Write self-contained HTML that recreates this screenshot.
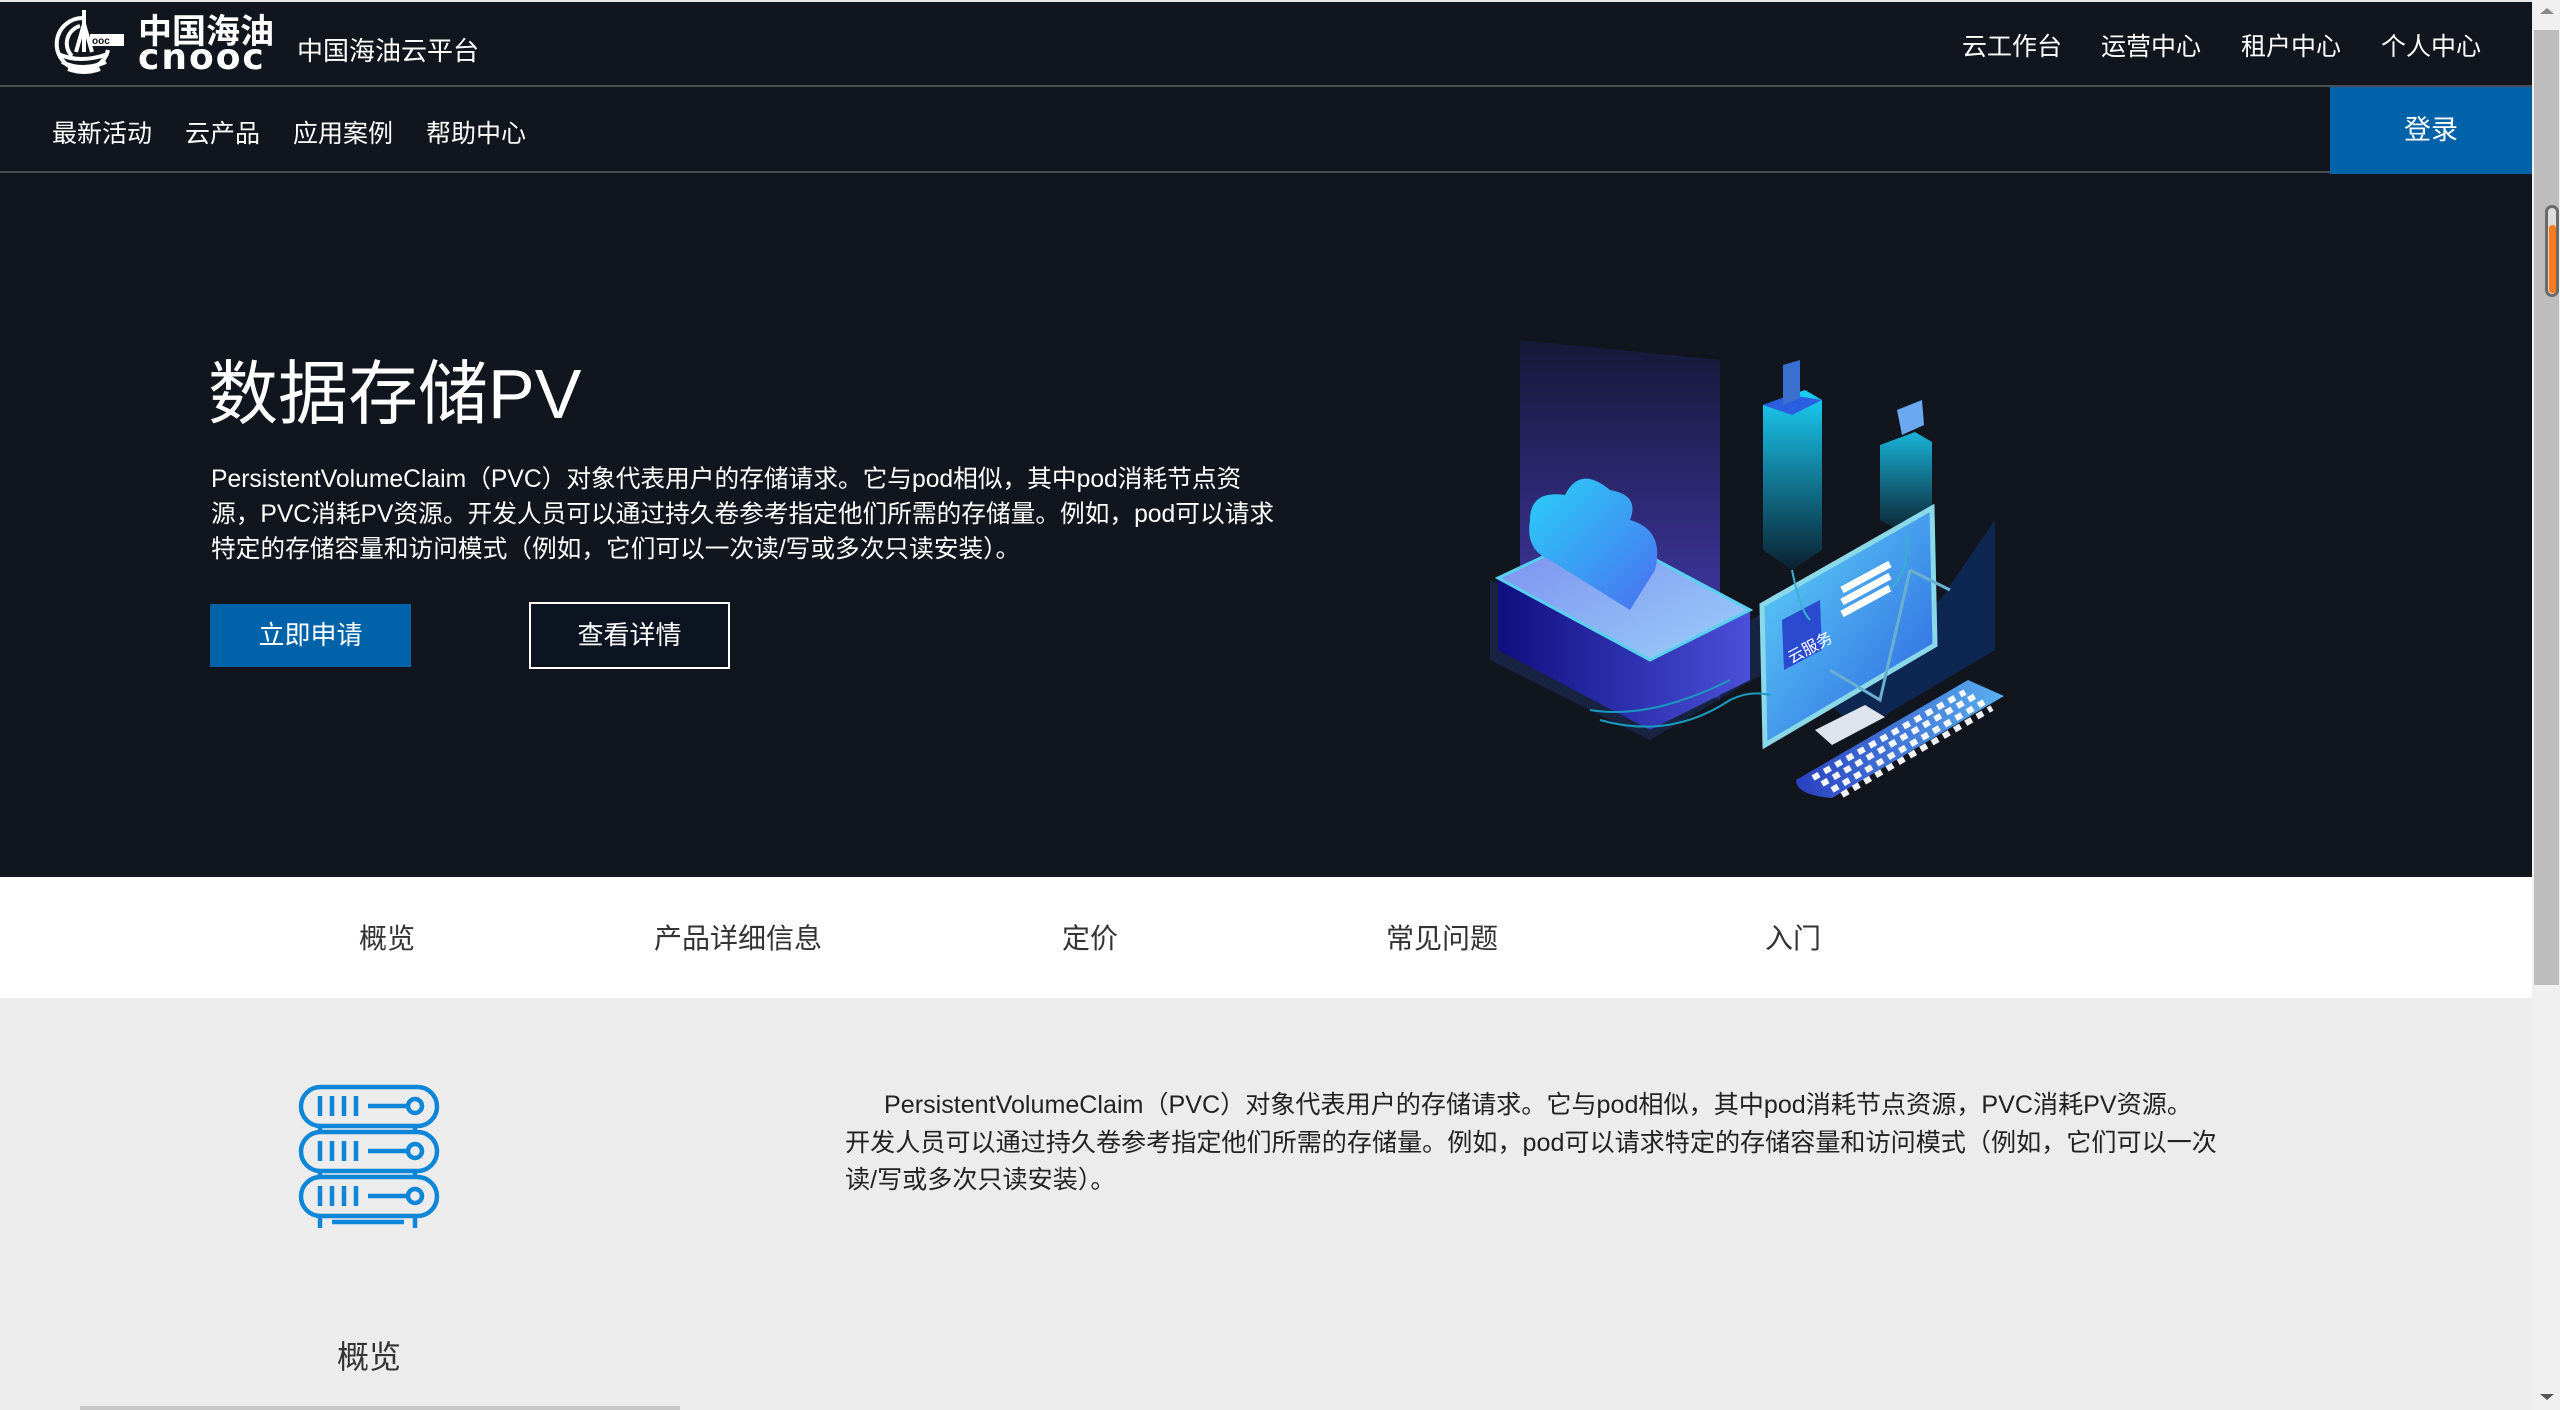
<!DOCTYPE html>
<html><head><meta charset="utf-8">
<style>
*{margin:0;padding:0;box-sizing:border-box}
html,body{width:2560px;height:1410px;overflow:hidden;background:#ececec;font-family:"Liberation Sans","Noto Sans CJK SC",sans-serif}
.abs{position:absolute}
#top{left:0;top:0;width:2532px;height:85px;background:#11151d;border-top:2px solid #e8e8e8}
#l1{left:0;top:85px;width:2532px;height:2px;background:#4a4d52}
#nav{left:0;top:87px;width:2532px;height:85px;background:#11151d}
#l2{left:0;top:171px;width:2330px;height:2px;background:#4a4d52}
#hero{left:0;top:173px;width:2532px;height:704px;background:#11151d}
.w{color:#fff;white-space:nowrap}
.t{font-size:24.7px}
#tabs{left:0;top:877px;width:2532px;height:121px;background:#fff}
.tab{position:absolute;top:40px;font-size:28px;color:#333;transform:translateX(-50%);white-space:nowrap}
</style></head><body>
<div id="top" class="abs"></div>
<div id="l1" class="abs"></div>
<div id="nav" class="abs"></div>
<div id="l2" class="abs"></div>
<div id="hero" class="abs"></div>

<!-- logo -->
<svg class="abs" style="left:50px;top:8px" width="78" height="68" viewBox="0 0 78 68">
<g fill="none" stroke="#fff" stroke-width="4">
<path d="M34 10 A26 26 0 1 0 58 42"/>
<path d="M30 18 A18 18 0 0 0 22 48"/>
<path d="M8 46 Q30 56 58 46"/><path d="M12 54 Q32 64 56 54"/><path d="M18 61 Q34 67 50 61"/>
</g>
<path d="M34 2 L34 44 M26 44 L34 16 L42 44" stroke="#fff" stroke-width="4" fill="none"/>
<rect x="40" y="26" width="34" height="12" fill="#fff"/>
<text x="42" y="36" font-size="10" font-weight="bold" fill="#11151d" font-family="Liberation Sans">ooc</text>
</svg>
<div class="abs w" style="left:138px;top:14px;font-size:34px;font-weight:bold;line-height:36px;letter-spacing:0px">中国海油</div>
<div class="abs w" style="left:138px;top:40px;font-size:36px;font-weight:bold;letter-spacing:2px;line-height:36px;font-family:'DejaVu Sans',sans-serif">cnooc</div>
<div class="abs w" style="left:297px;top:31px;font-size:26px">中国海油云平台</div>

<div class="abs w" style="left:1962px;top:27px;font-size:25px">云工作台</div>
<div class="abs w" style="left:2101px;top:27px;font-size:25px">运营中心</div>
<div class="abs w" style="left:2241px;top:27px;font-size:25px">租户中心</div>
<div class="abs w" style="left:2381px;top:27px;font-size:25px">个人中心</div>

<div class="abs w" style="left:52px;top:114px;font-size:25px">最新活动</div>
<div class="abs w" style="left:185px;top:114px;font-size:25px">云产品</div>
<div class="abs w" style="left:293px;top:114px;font-size:25px">应用案例</div>
<div class="abs w" style="left:426px;top:114px;font-size:25px">帮助中心</div>
<div class="abs" style="left:2330px;top:87px;width:202px;height:87px;background:#0062a8;color:#fff;font-size:27px;text-align:center;line-height:87px">登录</div>

<!-- hero -->
<div class="abs w" style="left:208px;top:352px;font-size:70px;line-height:84px">数据存储PV</div>
<div class="abs w t" style="left:211px;top:462px;line-height:35px">PersistentVolumeClaim（PVC）对象代表用户的存储请求。它与pod相似，其中pod消耗节点资<br>源，PVC消耗PV资源。开发人员可以通过持久卷参考指定他们所需的存储量。例如，pod可以请求<br>特定的存储容量和访问模式（例如，它们可以一次读/写或多次只读安装）。</div>
<div class="abs" style="left:210px;top:604px;width:201px;height:63px;background:#0062a8;color:#fff;font-size:26px;text-align:center;line-height:63px">立即申请</div>
<div class="abs" style="left:529px;top:602px;width:201px;height:67px;border:2px solid #fff;background:#0d1421;color:#fff;font-size:26px;text-align:center;line-height:63px">查看详情</div>

<!-- illustration -->
<svg class="abs" style="left:1470px;top:320px" width="560" height="500" viewBox="0 0 560 500">
<defs>
<linearGradient id="g1" x1="0" y1="0" x2="0" y2="1"><stop offset="0" stop-color="#161838"/><stop offset="1" stop-color="#4a3fc0"/></linearGradient>
<linearGradient id="g2" x1="0" y1="0" x2="1" y2="0"><stop offset="0" stop-color="#0f0f80"/><stop offset="1" stop-color="#4a50d8"/></linearGradient>
<linearGradient id="g3" x1="0" y1="0" x2="1" y2="1"><stop offset="0" stop-color="#7a8cf0"/><stop offset="1" stop-color="#9ad0f8"/></linearGradient>
<linearGradient id="g4" x1="0" y1="0" x2="1" y2="1"><stop offset="0" stop-color="#2ad0f8"/><stop offset="1" stop-color="#4a70f0"/></linearGradient>
<linearGradient id="g5" x1="0" y1="0" x2="0" y2="1"><stop offset="0" stop-color="#1ad0f8"/><stop offset="1" stop-color="#0a2030"/></linearGradient>
<linearGradient id="g6" x1="0" y1="0" x2="1" y2="1"><stop offset="0" stop-color="#60d8f8"/><stop offset="1" stop-color="#2a60e0"/></linearGradient>
<linearGradient id="g7" x1="0" y1="0" x2="1" y2="0"><stop offset="0" stop-color="#2a40c0"/><stop offset="1" stop-color="#5ab0f0"/></linearGradient>
</defs>
<path d="M50 20 L250 40 L250 380 L50 300 Z" fill="url(#g1)"/>
<path d="M20 340 L180 420 L300 350 L300 290 L200 340 L20 260 Z" fill="#1a2a50" opacity=".7"/>
<path d="M28 258 L180 340 L280 290 L280 360 L180 410 L28 330 Z" fill="url(#g2)"/>
<path d="M28 258 L130 210 L280 290 L180 340 Z" fill="url(#g3)" stroke="#5ad0f0" stroke-width="3"/>
<path d="M60 200 Q60 170 95 175 Q110 145 140 170 Q170 175 160 200 Q195 210 185 250 L160 290 L80 240 Q55 230 60 200Z" fill="url(#g4)"/>
<path d="M293 85 L335 70 L352 80 L352 230 L322 250 L293 230 Z" fill="url(#g5)"/>
<path d="M293 85 L320 75 L352 80 L322 95 Z" fill="#2a60e0"/>
<path d="M313 45 L330 40 L330 78 L313 85 Z" fill="#3a70d0"/>
<path d="M410 125 L445 112 L462 122 L462 200 L437 215 L410 200 Z" fill="url(#g5)" opacity=".85"/>
<path d="M427 90 L452 80 L454 105 L432 115 Z" fill="#6aa8f0"/>
<path d="M330 360 L470 280 L525 200 L525 330 L390 410 Z" fill="#0d2a60" opacity=".8"/>
<path d="M292 285 L462 188 L465 325 L295 425 Z" fill="url(#g6)" stroke="#8ad8e8" stroke-width="5"/>
<path d="M312 300 L350 280 L352 330 L314 350 Z" fill="#2a4ad0"/>
<text x="316" y="338" font-size="16" fill="#fff" transform="rotate(-28 330 330)" font-family="Noto Sans CJK SC">云服务</text>
<path d="M372 270 L420 244 M372 282 L420 256 M372 294 L420 268" stroke="#fff" stroke-width="7"/>
<path d="M440 250 L480 270 M360 350 L410 380 L440 250" stroke="#6ab0d0" stroke-width="3" fill="none"/>
<path d="M345 410 L395 385 L415 397 L362 425 Z" fill="#dde4ee"/>
<path d="M326 460 L498 360 L534 376 L362 478 Q326 475 326 460Z" fill="url(#g7)"/>
<g stroke="#fff" stroke-width="6" stroke-dasharray="7 6" opacity=".95">
<path d="M343 458 L495 372"/>
<path d="M352 464 L505 376"/>
<path d="M362 470 L514 382"/>
<path d="M372 475 L522 388"/>
</g>
<path d="M130 400 Q200 420 260 380 Q280 370 300 375 M120 390 Q180 400 260 360" stroke="#1a9ac0" stroke-width="2" fill="none"/>
<path d="M322 250 Q330 290 340 300 M437 215 Q440 250 420 270" stroke="#3ab0d0" stroke-width="2" fill="none"/>
</svg>

<!-- tabs -->
<div id="tabs" class="abs">
<div class="tab" style="left:387px">概览</div>
<div class="tab" style="left:738px">产品详细信息</div>
<div class="tab" style="left:1090px">定价</div>
<div class="tab" style="left:1442px">常见问题</div>
<div class="tab" style="left:1793px">入门</div>
</div>

<!-- server icon -->
<svg class="abs" style="left:298px;top:1084px" width="142" height="144" viewBox="0 0 142 144">
<g fill="none" stroke="#0d86d8" stroke-width="4.5">
<rect x="3" y="3" width="136" height="39" rx="19.5"/>
<rect x="3" y="48" width="136" height="39" rx="19.5"/>
<rect x="3" y="93" width="136" height="39" rx="19.5"/>
<path d="M22 42v6M117 42v6M22 87v6M117 87v6M22 132v12M117 132v12M34 138h72"/>
<g><path d="M22 12v20M34 12v20M46 12v20M58 12v20M70 22h38"/><circle cx="117" cy="22" r="7"/></g>
<g transform="translate(0,45)"><path d="M22 12v20M34 12v20M46 12v20M58 12v20M70 22h38"/><circle cx="117" cy="22" r="7"/></g>
<g transform="translate(0,90)"><path d="M22 12v20M34 12v20M46 12v20M58 12v20M70 22h38"/><circle cx="117" cy="22" r="7"/></g>
</g>
</svg>
<div class="abs" style="left:337px;top:1332px;font-size:32px;color:#333">概览</div>

<div class="abs" style="left:845px;top:1087px;width:1390px;font-size:25.1px;line-height:37.5px;color:#222;white-space:nowrap">&emsp;&nbsp;&nbsp;PersistentVolumeClaim（PVC）对象代表用户的存储请求。它与pod相似，其中pod消耗节点资源，PVC消耗PV资源。<br>开发人员可以通过持久卷参考指定他们所需的存储量。例如，pod可以请求特定的存储容量和访问模式（例如，它们可以一次<br>读/写或多次只读安装）。</div>

<!-- scrollbar -->
<div class="abs" style="left:2532px;top:0;width:28px;height:1410px;background:#f0f0f0"></div>
<div class="abs" style="left:2534px;top:30px;width:25px;height:955px;background:#bdbdbd"></div>
<div class="abs" style="left:2545px;top:205px;width:14px;height:92px;border:3px solid #6a6a6a;border-radius:7px;background:#ddd"></div>
<div class="abs" style="left:2549px;top:225px;width:7px;height:68px;background:#ff7a1a;border-radius:3px"></div>
<div class="abs" style="left:2540px;top:8px;width:0;height:0;border-left:7px solid transparent;border-right:7px solid transparent;border-bottom:6px solid #888"></div>
<div class="abs" style="left:2540px;top:1394px;width:0;height:0;border-left:7px solid transparent;border-right:7px solid transparent;border-top:6px solid #555"></div>
<div class="abs" style="left:80px;top:1406px;width:600px;height:4px;background:#c8c8c8"></div>
</body></html>
